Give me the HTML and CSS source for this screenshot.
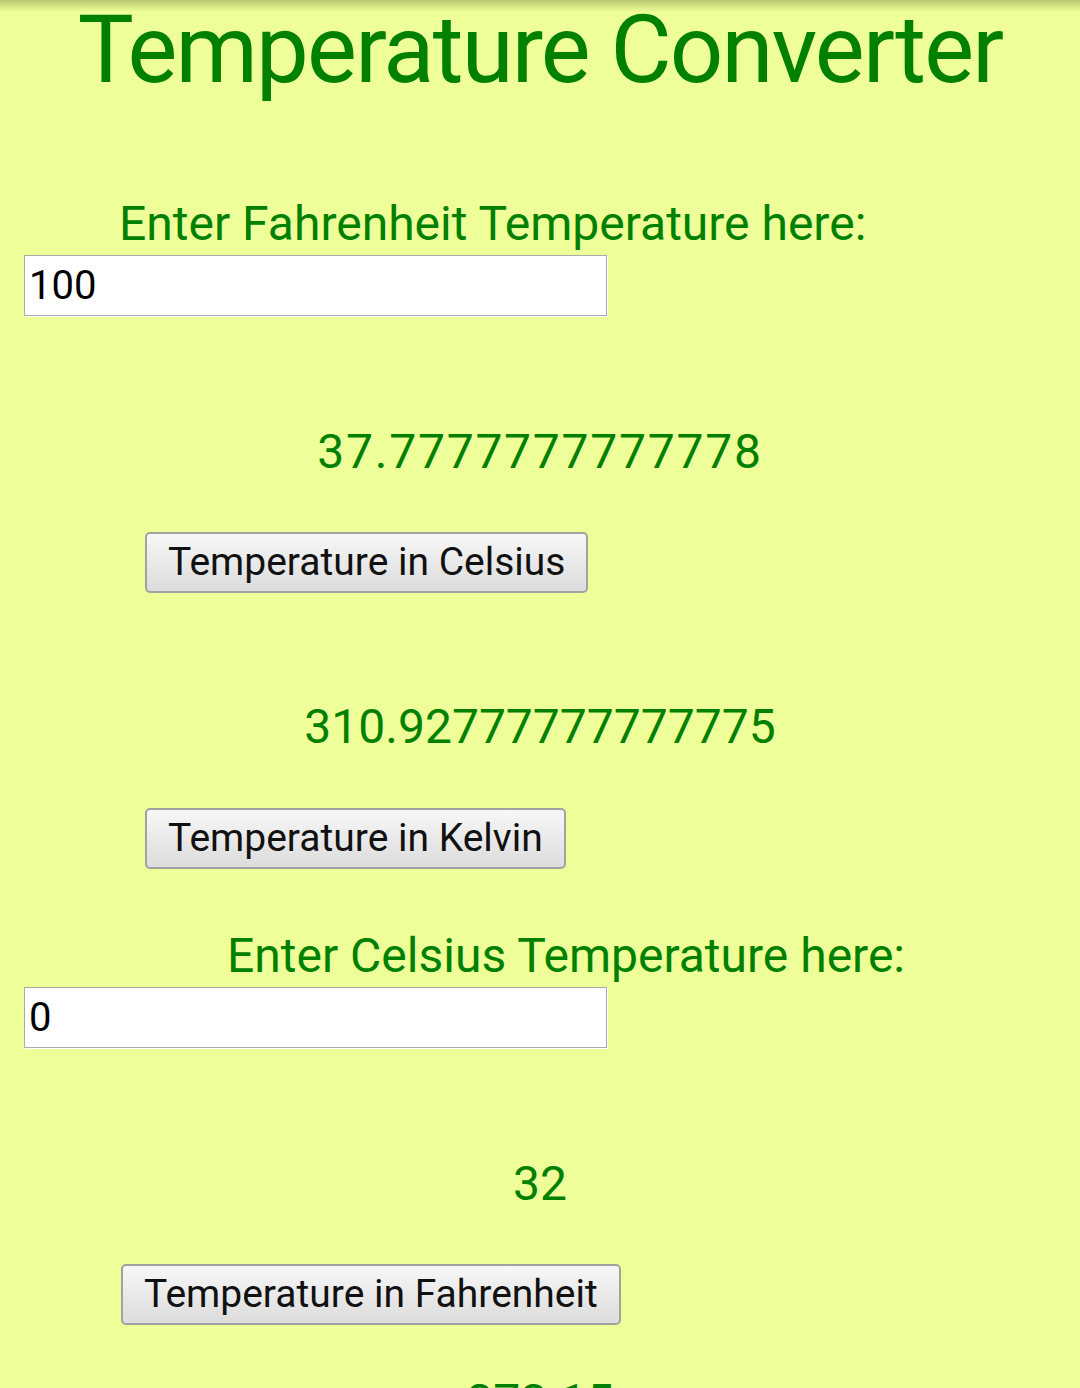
FILE: index.html
```html
<!DOCTYPE html>
<html>
<head>
<meta charset="utf-8">
<title>Temperature Converter</title>
<link rel="stylesheet" href="styles.css">
</head>
<body>
<div class="shade"></div>
<main class="page">
  <h1 class="title">Temperature Converter</h1>

  <p class="label label-f">Enter Fahrenheit Temperature here:</p>
  <input class="field field-f" type="text" value="100">
  <p class="result result-c">37.7777777777778</p>
  <button class="btn btn-c">Temperature in Celsius</button>
  <p class="result result-k">310.92777777777775</p>
  <button class="btn btn-k">Temperature in Kelvin</button>

  <p class="label label-c">Enter Celsius Temperature here:</p>
  <input class="field field-c" type="text" value="0">
  <p class="result result-f">32</p>
  <button class="btn btn-f">Temperature in Fahrenheit</button>
  <p class="result result-k2">273.15</p>
</main>
</body>
</html>
```

FILE: styles.css
```css
html, body {
  margin: 0;
  padding: 0;
  background: #eeff99;
  height: 100%;
  overflow: hidden;
}
body {
  font-family: Roboto, "Liberation Sans", sans-serif;
}
.shade {
  position: absolute;
  left: 0;
  top: 0;
  right: 0;
  height: 12px;
  background: linear-gradient(to bottom, rgba(90, 100, 40, 0.35), rgba(90, 100, 40, 0));
  pointer-events: none;
}
.page {
  display: flex;
  flex-direction: column;
  align-items: flex-start;
  padding: 0 24px;
}
.title {
  align-self: stretch;
  margin: 0 -24px;
  font-size: 94px;
  font-weight: 400;
  letter-spacing: -1.8px;
  line-height: 100px;
  color: #008000;
  text-align: center;
}
.label {
  margin: 0;
  font-size: 48px;
  line-height: 56px;
  color: #008000;
}
.label-f {
  margin-top: 96px;
  margin-left: 95px;
}
.label-c {
  margin-top: 59px;
  margin-left: 203px;
}
.field {
  display: block;
  box-sizing: border-box;
  width: 583px;
  height: 61px;
  margin: 3px 0 0 0;
  padding: 0 4px;
  border: 1px solid #ababab;
  box-shadow: 1px 1px 0 #ffffff;
  background: #ffffff;
  font-family: Roboto, "Liberation Sans", sans-serif;
  font-size: 40px;
  color: #000000;
  outline: none;
}
.result {
  align-self: stretch;
  margin: 0 -24px;
  font-size: 48px;
  line-height: 56px;
  color: #008000;
  text-align: center;
}
.result-c { margin-top: 108px; letter-spacing: 1.75px; }
.result-k { margin-top: 106px; }
.result-f { margin-top: 108px; }
.result-k2 { margin-top: 49px; }
.btn {
  box-sizing: border-box;
  height: 61px;
  padding: 0 21px;
  border: 2px solid #a2a2a2;
  border-radius: 5px;
  background: linear-gradient(to bottom, #f7f7f7, #dcdcdc);
  font-family: Roboto, "Liberation Sans", sans-serif;
  font-size: 39px;
  line-height: 57px;
  color: #111111;
  margin-top: 52px;
}
.btn-c { margin-left: 121px; }
.btn-k { margin-left: 121px; margin-top: 53px; }
.btn-f { margin-left: 97px; }
```
